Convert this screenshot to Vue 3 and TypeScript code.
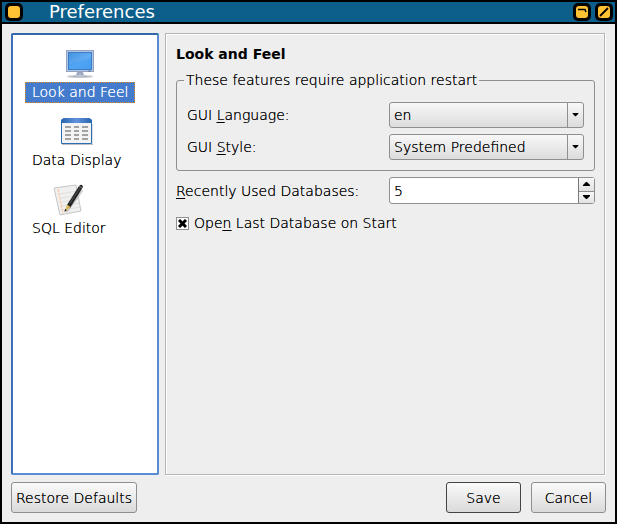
<script setup lang="ts">
import { ref } from 'vue'

type PageId = 'look' | 'data' | 'sql'

const pages: { id: PageId; label: string }[] = [
  { id: 'look', label: 'Look and Feel' },
  { id: 'data', label: 'Data Display' },
  { id: 'sql', label: 'SQL Editor' },
]

const current = ref<PageId>('look')
const language = ref('en')
const guiStyle = ref('System Predefined')
const recent = ref(5)
const openLast = ref(true)

function step(delta: number) {
  recent.value = Math.max(0, recent.value + delta)
}

function restore() {
  language.value = 'en'
  guiStyle.value = 'System Predefined'
  recent.value = 5
  openLast.value = true
}
</script>

<template>
  <div class="window">
    <header class="titlebar">
      <button class="wm" type="button" aria-label="Window menu">
        <svg width="18" height="18" viewBox="0 0 18 18"><rect width="18" height="18" rx="5" fill="#000" /><rect x="3" y="3" width="12" height="12" rx="3" fill="#ffc234" /></svg>
      </button>
      <h1>Preferences</h1>
      <button class="wm" type="button" aria-label="Shade">
        <svg width="18" height="18" viewBox="0 0 18 18"><rect width="18" height="18" rx="5" fill="#000" /><rect x="3" y="3" width="12" height="12" rx="3" fill="#ffc234" /><path d="M5 6.5H12L13 9" fill="none" stroke="#000" stroke-width="1.6" /></svg>
      </button>
      <button class="wm" type="button" aria-label="Close">
        <svg width="18" height="18" viewBox="0 0 18 18"><rect width="18" height="18" rx="5" fill="#000" /><rect x="3" y="3" width="12" height="12" rx="3" fill="#ffc234" /><path d="M5 13L13 5" fill="none" stroke="#000" stroke-width="1.8" /></svg>
      </button>
    </header>

    <main class="body">
      <div class="panes">
        <nav class="pages" aria-label="Sections">
          <button
            v-for="page in pages"
            :key="page.id"
            type="button"
            class="page"
            :class="{ selected: current === page.id }"
            @click="current = page.id"
          >
            <svg v-if="page.id === 'look'" class="icon" width="32" height="32" viewBox="0 0 32 32">
              <defs>
                <linearGradient id="screen" x1="0" y1="0" x2="1" y2="1"><stop offset="0" stop-color="#3488de" /><stop offset=".5" stop-color="#52a5f2" /><stop offset="1" stop-color="#459cf0" /></linearGradient>
              </defs>
              <ellipse cx="16" cy="28.5" rx="13" ry="1.6" fill="#c7cbd2" />
              <path d="M13 24h6l1 3.5h-8z" fill="#9fabc0" />
              <path d="M9 28.5q7-3 14 0z" fill="#e8ebf0" stroke="#a5afbf" stroke-width=".7" />
              <rect x="2.5" y="2.5" width="27" height="21" fill="#b5c5df" stroke="#92a4c3" />
              <rect x="4.5" y="4.500" width="23" height="17" fill="url(#screen)" stroke="#3a7cc6" />
              <path d="M5 5h22v6Q16 11 5 17z" fill="#fff" opacity=".08" />
              <path d="M24.500 23h2" stroke="#465970" />
            </svg>
            <svg v-else-if="page.id === 'data'" class="icon" width="32" height="32" viewBox="0 0 32 32">
              <defs>
                <linearGradient id="bar"><stop offset="0" stop-color="#2666ac" /><stop offset=".5" stop-color="#6492dc" /><stop offset="1" stop-color="#2666ac" /></linearGradient>
              </defs>
              <path d="M1 28.500h31V8" fill="none" stroke="#bcc1c8" />
              <path d="M.5 27.500V4L3 2.500h25L30.500 4v23.500z" fill="#f3f3f3" stroke="#2f6db1" />
              <path d="M0 7V4L3 2h25l3 2v3z" fill="url(#bar)" />
              <path d="M4 11h6m3 0h5m3 0h6M4 15h6m3 0h5m3 0h6M4 19h6m3 0h5m3 0h6M4 23h6m3 0h5m3 0h6" stroke="#a2a2a2" stroke-width="2" />
            </svg>
            <svg v-else class="icon" width="32" height="32" viewBox="0 0 32 32">
              <path d="M1 4L23 1l5 26L7 31z" fill="#f0f0f0" stroke="#c6c6c6" />
              <path d="M7 10l17-3M8 14l17-3M9 18l17-3M9 22l17-3M10 26l17-3" stroke="#e2dfdc" />
              <path d="M5 5l5 25" stroke="#ffc394" stroke-dasharray="3 1" />
              <path d="M13 28l16-22" stroke="#aaa" stroke-width="3" opacity=".5" />
              <path d="M14 21L26 2q3-3 4 1L17 24z" fill="#242424" />
              <path d="M14 20.500l3.500 2.500-6 5z" fill="#d9b657" />
              <path d="M11.500 27.700l.6-2.700 1.700 1.300z" fill="#111" />
              <path d="M17 19L27 4" stroke="#555" />
              <path d="M26 2l3 2" stroke="#8a8a8a" />
            </svg>
            <span>{{ page.label }}</span>
          </button>
        </nav>

        <section class="panel">
          <h2>Look and Feel</h2>
          <fieldset>
            <legend>These features require application restart</legend>
            <label for="language">GUI <u>L</u>anguage:</label>
            <div class="combo">
              <select id="language" v-model="language">
                <option>en</option>
                <option>cs</option>
                <option>de</option>
              </select>
              <svg width="9" height="5" viewBox="0 0 9 5"><path d="M1 0h7v1L5 4H4L1 1z" /></svg>
            </div>
            <label for="style">GUI <u>S</u>tyle:</label>
            <div class="combo">
              <select id="style" v-model="guiStyle">
                <option>System Predefined</option>
                <option>Plastique</option>
              </select>
              <svg width="9" height="5" viewBox="0 0 9 5"><path d="M1 0h7v1L5 4H4L1 1z" /></svg>
            </div>
          </fieldset>
          <div class="row">
            <label for="recent"><u>R</u>ecently Used Databases:</label>
            <div class="spin">
              <input id="recent" v-model.number="recent" type="number" min="0" />
              <div class="steps">
                <button type="button" aria-label="Increase" @click="step(1)">
                  <svg width="9" height="5" viewBox="0 0 9 5"><path d="M1 4h7V3L5 0H4L1 3z" /></svg>
                </button>
                <button type="button" aria-label="Decrease" @click="step(-1)">
                  <svg width="9" height="5" viewBox="0 0 9 5"><path d="M1 0h7v1L5 4H4L1 1z" /></svg>
                </button>
              </div>
            </div>
          </div>
          <label class="check">
            <input v-model="openLast" type="checkbox" />
            <svg v-if="openLast" width="9" height="9" viewBox="0 0 9 9"><path d="M1 1l7 7M8 1L1 8" stroke="#000" stroke-width="3" /></svg>
            <span>Ope<u>n</u> Last Database on Start</span>
          </label>
        </section>
      </div>

      <footer class="actions">
        <button class="push" type="button" @click="restore">Restore Defaults</button>
        <span class="spacer"></span>
        <button class="push default" type="button">Save</button>
        <button class="push" type="button">Cancel</button>
      </footer>
    </main>
  </div>
</template>

<style>
body {
  margin: 0;
  background: #000;
}
</style>

<style scoped>
* {
  box-sizing: border-box;
}

.window {
  display: flex;
  flex-direction: column;
  min-height: 100vh;
  border: 2px solid #000;
  background: #eee;
  color: #000;
  font: 200 14px/20px "DejaVu Sans", sans-serif;
}

button,
input,
select {
  margin: 0;
  padding: 0;
  border: 0;
  border-radius: 0;
  background: none;
  color: inherit;
  font: inherit;
}

button,
label,
legend,
input,
select {
  text-shadow: 0 0 0 currentColor;
}

svg {
  display: block;
}

u {
  text-underline-offset: 2px;
}

.titlebar {
  display: flex;
  align-items: center;
  gap: 4px;
  height: 22px;
  padding: 0 2px 0 3px;
  border-bottom: 2px solid #000;
  background: #0b5f8a;
}

h1 {
  flex: 1;
  margin: 0;
  padding-left: 22px;
  color: #fff;
  font: 400 18px/22px "DejaVu Sans", sans-serif;
}

.body {
  display: flex;
  flex: 1;
  flex-direction: column;
  gap: 7px;
  padding: 9px;
}

.panes {
  display: flex;
  flex: 1;
  gap: 6px;
  margin-right: 1px;
}

.pages {
  display: flex;
  flex: 0 0 148px;
  flex-direction: column;
  align-items: flex-start;
  gap: 13px;
  padding: 13px 12px;
  border: 2px solid #5b8bd6;
  border-top-color: #3565aa;
  border-left-color: #3c70ba;
  border-radius: 2px;
  background: #fff;
}

.page {
  display: flex;
  flex-direction: column;
  align-items: center;
  gap: 2px;
}

.page span {
  padding: 0 6px;
  border: 1px solid transparent;
  line-height: 19px;
}

.page.selected span {
  border: 1px dotted #e08a1c;
  background: #447bcd;
  color: #fff;
}

.panel {
  flex: 1;
  min-width: 0;
  padding: 10px 9px 10px 10px;
  border: 1px solid #b5b5b5;
  box-shadow: inset 1px 1px #fff, 1px 1px #fff;
}

h2 {
  margin: 0;
  font-size: 14px;
  font-weight: 700;
  line-height: 20px;
}

fieldset {
  display: grid;
  grid-template-columns: 196px 1fr;
  gap: 6px;
  align-items: center;
  min-width: 0;
  margin: 6px 0;
  padding: 12px 10px 10px;
  border: 1px solid #8f8f8f;
  border-radius: 3px;
}

legend {
  margin-left: -3px;
  padding: 0 2px;
}

.combo,
.spin {
  display: flex;
  position: relative;
  min-width: 0;
  border: 1px solid #8f8f8f;
  border-radius: 3px;
}

.combo {
  height: 26px;
  background: linear-gradient(#f8f8f8, #dcdcdc);
}

.combo select {
  width: 100%;
  padding-left: 4px;
  appearance: none;
}

.combo svg {
  position: absolute;
  top: 0;
  right: 0;
  width: 16px;
  height: 24px;
  padding: 10px 3px;
  border-left: 1px solid #8f8f8f;
  pointer-events: none;
}

.row {
  display: grid;
  grid-template-columns: 213px 1fr;
  align-items: center;
}

.spin {
  height: 27px;
  background: #fff;
}

.spin input {
  flex: 1;
  min-width: 0;
  padding-left: 4px;
  appearance: textfield;
}

.spin input::-webkit-inner-spin-button {
  appearance: none;
}

.steps {
  display: grid;
  grid-template-rows: 1fr 1fr;
  width: 16px;
  border-left: 1px solid #777;
}

.steps button {
  display: grid;
  place-items: center;
  background: linear-gradient(#f8f8f8, #e2e2e2);
}

.steps button + button {
  border-top: 1px solid #8f8f8f;
}

.check {
  display: flex;
  position: relative;
  align-items: center;
  gap: 5px;
  margin-top: 9px;
}

.check input {
  width: 13px;
  height: 13px;
  border: 1px solid #8f8f8f;
  background: #fff;
  appearance: none;
}

.check svg {
  position: absolute;
  left: 2px;
  pointer-events: none;
}

.actions {
  display: flex;
  gap: 10px;
}

.spacer {
  flex: 1;
}

.push {
  min-width: 75px;
  height: 31px;
  padding: 0 4px;
  border: 1px solid #8f8f8f;
  border-radius: 3px;
  background: linear-gradient(#fafafa, #dadada);
}

.push.default {
  border-color: #444;
}
</style>
